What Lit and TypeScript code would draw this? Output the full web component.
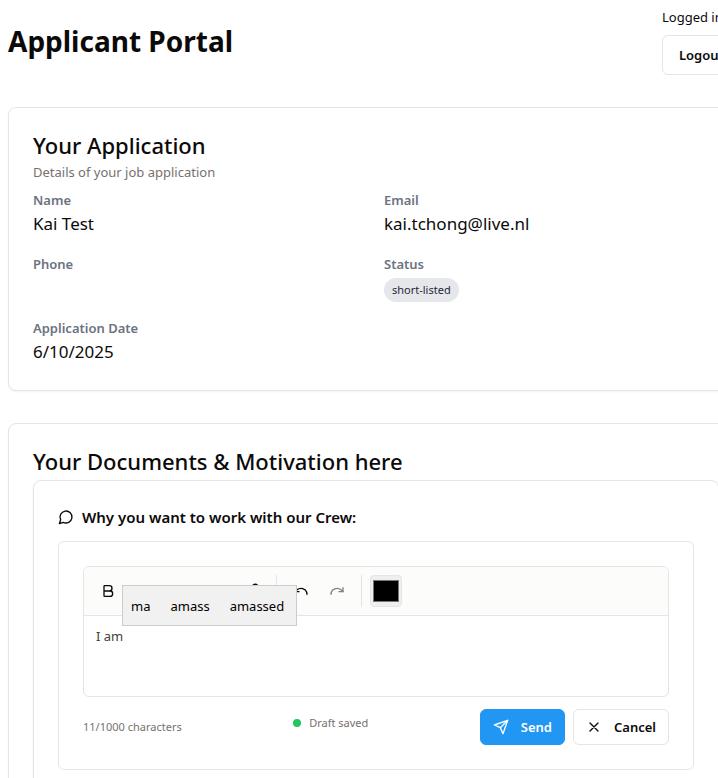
import { LitElement, html, css, svg } from "lit";
import { customElement, property } from "lit/decorators.js";

const icons = {
  bold: svg`<path d="M6 12h9a4 4 0 0 1 0 8H7a1 1 0 0 1-1-1V5a1 1 0 0 1 1-1h7a4 4 0 0 1 0 8"/>`,
  italic: svg`<path d="M19 4h-9M14 20H5M15 4 9 20"/>`,
  underline: svg`<path d="M6 4v6a6 6 0 0 0 12 0V4M4 20h16"/>`,
  list: svg`<path d="M8 6h13M8 12h13M8 18h13M3 6h.01M3 12h.01M3 18h.01"/>`,
  link: svg`<path d="M10 13a5 5 0 0 0 7.54.54l3-3a5 5 0 0 0-7.07-7.07l-1.72 1.71"/><path d="M14 11a5 5 0 0 0-7.54-.54l-3 3a5 5 0 0 0 7.07 7.07l1.71-1.71"/>`,
  undo: svg`<path d="M3 7v6h6"/><path d="M21 17a9 9 0 0 0-9-9 9 9 0 0 0-6 2.3L3 13"/>`,
  redo: svg`<path d="M21 7v6h-6"/><path d="M3 17a9 9 0 0 1 9-9 9 9 0 0 1 6 2.3l3 2.7"/>`,
  message: svg`<path d="M7.9 20A9 9 0 1 0 4 16.1L2 22Z"/>`,
  send: svg`<path d="m22 2-7 20-4-9-9-4Z"/><path d="M22 2 11 13"/>`,
  close: svg`<path d="M18 6 6 18M6 6l12 12"/>`,
};

type IconName = keyof typeof icons;

const icon = (name: IconName) => html`
  <svg class="icon" viewBox="0 0 24 24" aria-hidden="true">${icons[name]}</svg>
`;

const base = css`
  * {
    box-sizing: border-box;
  }
  .icon {
    width: 16px;
    height: 16px;
    flex: none;
    fill: none;
    stroke: currentColor;
    stroke-width: 2;
    stroke-linecap: round;
    stroke-linejoin: round;
  }
  button,
  textarea {
    font-family: inherit;
    color: inherit;
  }
`;

@customElement("rich-editor")
export class RichEditor extends LitElement {
  @property() value = "";
  @property({ attribute: false }) suggestions: string[] = [];

  static styles = [
    base,
    css`
      :host {
        display: block;
        position: relative;
        border: 1px solid #e5e5e5;
        border-radius: 6px;
      }
      .toolbar {
        display: flex;
        align-items: center;
        gap: 4px;
        padding: 8px;
        background: #fcfcfb;
        border-bottom: 1px solid #e5e5e5;
        border-radius: 5px 5px 0 0;
      }
      .tool {
        display: grid;
        place-items: center;
        width: 32px;
        height: 32px;
        padding: 0;
        border: 0;
        border-radius: 4px;
        background: none;
      }
      .tool:disabled {
        opacity: 0.5;
      }
      .divider {
        width: 1px;
        height: 32px;
        margin: 0 4px;
        background: #e5e5e5;
      }
      .color {
        width: 32px;
        height: 32px;
        padding: 0;
        border: 1px solid #e5e5e5;
        border-radius: 4px;
        background: #efefef;
      }
      .color::-webkit-color-swatch-wrapper {
        padding: 4px 2px;
      }
      .color::-webkit-color-swatch {
        border: 1px solid #767676;
        border-radius: 0;
      }
      .text {
        display: block;
        width: 100%;
        height: 80px;
        padding: 8px 12px;
        border: 0;
        outline: 0;
        resize: none;
        background: none;
        font-size: 13px;
        line-height: 24px;
        color: #44403c;
      }
      .suggestions {
        position: absolute;
        top: 18px;
        left: 38px;
        display: flex;
        gap: 20px;
        padding: 1px 12px 0 8px;
        border: 1px solid #cccccc;
        background: #f1f1f1;
      }
      .suggestion {
        padding: 0;
        border: 0;
        background: none;
        color: #000000;
        font-size: 13px;
        line-height: 38px;
      }
    `,
  ];

  private tool(name: IconName, label: string, disabled = false) {
    return html`<button class="tool" type="button" aria-label=${label} ?disabled=${disabled}>${icon(name)}</button>`;
  }

  render() {
    return html`
      <div class="toolbar" role="toolbar" aria-label="Formatting">
        ${this.tool("bold", "Bold")} ${this.tool("italic", "Italic")}
        ${this.tool("underline", "Underline")} ${this.tool("list", "List")}
        ${this.tool("link", "Link")}
        <span class="divider"></span>
        ${this.tool("undo", "Undo")} ${this.tool("redo", "Redo", true)}
        <span class="divider"></span>
        <input class="color" type="color" value="#000000" aria-label="Text color" />
      </div>
      <textarea class="text" aria-label="Motivation" spellcheck="false" .value=${this.value}></textarea>
      <div class="suggestions">
        ${this.suggestions.map((s) => html`<button class="suggestion" type="button">${s}</button>`)}
      </div>
    `;
  }
}

@customElement("app-root")
export class AppRoot extends LitElement {
  static styles = [
    base,
    css`
      :host {
        display: block;
        min-height: 100vh;
        overflow: hidden;
        background: #ffffff;
        color: #0c0a09;
        font-family: "Noto Sans", "Open Sans", sans-serif;
        font-size: 13px;
        line-height: 20px;
      }
      h1,
      h2,
      h3,
      p,
      dl,
      dd {
        margin: 0;
      }
      /* The content runs wider than the window and is cut off at its right edge. */
      .page {
        display: flex;
        flex-direction: column;
        gap: 32px;
        width: calc(100% + 26px);
        padding: 7px 0 0 8px;
      }
      .header {
        display: flex;
        align-items: center;
        justify-content: space-between;
      }
      h1 {
        font-size: 28px;
        line-height: 38px;
        font-weight: 700;
      }
      .account {
        display: flex;
        flex-direction: column;
        gap: 8px;
        width: 82px;
        white-space: nowrap;
      }
      .button {
        display: flex;
        align-items: center;
        gap: 12px;
        height: 36px;
        padding: 0 12px;
        border: 1px solid #e5e5e5;
        border-radius: 6px;
        background: #ffffff;
        font-size: 13px;
        line-height: 20px;
        font-weight: 600;
      }
      .button.large {
        height: 40px;
        padding: 0 16px;
      }
      .button.primary {
        border-color: #2196f3;
        background: #2196f3;
        color: #ffffff;
      }
      .card {
        padding: 24px;
        border: 1px solid #e5e5e5;
        border-radius: 8px;
        background: #ffffff;
        box-shadow: 0 1px 2px rgba(0, 0, 0, 0.05);
      }
      h2 {
        font-size: 22px;
        line-height: 26px;
        font-weight: 500;
      }
      .subtitle {
        margin: 4px 0 8px;
        color: #78716c;
      }
      .details {
        display: grid;
        grid-template-columns: 1fr 1fr;
        gap: 16px;
      }
      dt {
        color: #6b7280;
        font-weight: 600;
      }
      dd {
        display: flex;
        align-items: center;
        height: 28px;
        font-size: 17px;
        line-height: 28px;
      }
      .badge {
        margin-top: 4px;
        padding: 0 8px;
        border-radius: 12px;
        background: #e5e7eb;
        color: #1f2937;
        font-size: 11px;
        line-height: 24px;
      }
      .nested {
        margin-top: 6px;
      }
      h3 {
        display: flex;
        align-items: center;
        gap: 8px;
        margin-bottom: 12px;
        font-size: 15px;
        line-height: 24px;
        font-weight: 600;
      }
      .box {
        padding: 24px;
        border: 1px solid #e5e5e5;
        border-radius: 6px;
      }
      .footer {
        display: flex;
        align-items: center;
        justify-content: space-between;
        margin-top: 12px;
        color: #78716c;
        font-size: 11px;
      }
      .draft {
        display: flex;
        align-items: center;
        gap: 8px;
        margin-bottom: 8px;
      }
      .dot {
        width: 8px;
        height: 8px;
        border-radius: 50%;
        background: #22c55e;
      }
      .actions {
        display: flex;
        gap: 8px;
        color: #0c0a09;
      }
    `,
  ];

  render() {
    return html`
      <div class="page">
        <header class="header">
          <h1>Applicant Portal</h1>
          <div class="account">
            <span>Logged in</span>
            <button class="button large" type="button">Logout</button>
          </div>
        </header>

        <section class="card">
          <h2>Your Application</h2>
          <p class="subtitle">Details of your job application</p>
          <dl class="details">
            <div><dt>Name</dt><dd>Kai Test</dd></div>
            <div><dt>Email</dt><dd>kai.tchong@live.nl</dd></div>
            <div><dt>Phone</dt><dd></dd></div>
            <div><dt>Status</dt><dd><span class="badge">short-listed</span></dd></div>
            <div><dt>Application Date</dt><dd>6/10/2025</dd></div>
          </dl>
        </section>

        <section class="card">
          <h2>Your Documents &amp; Motivation here</h2>
          <section class="card nested">
            <h3>${icon("message")}Why you want to work with our Crew:</h3>
            <div class="box">
              <rich-editor value="I am" .suggestions=${["ma", "amass", "amassed"]}></rich-editor>
              <div class="footer">
                <span>11/1000 characters</span>
                <span class="draft"><span class="dot"></span>Draft saved</span>
                <div class="actions">
                  <button class="button primary" type="button">${icon("send")}Send</button>
                  <button class="button" type="button">${icon("close")}Cancel</button>
                </div>
              </div>
            </div>
          </section>
        </section>
      </div>
    `;
  }
}
